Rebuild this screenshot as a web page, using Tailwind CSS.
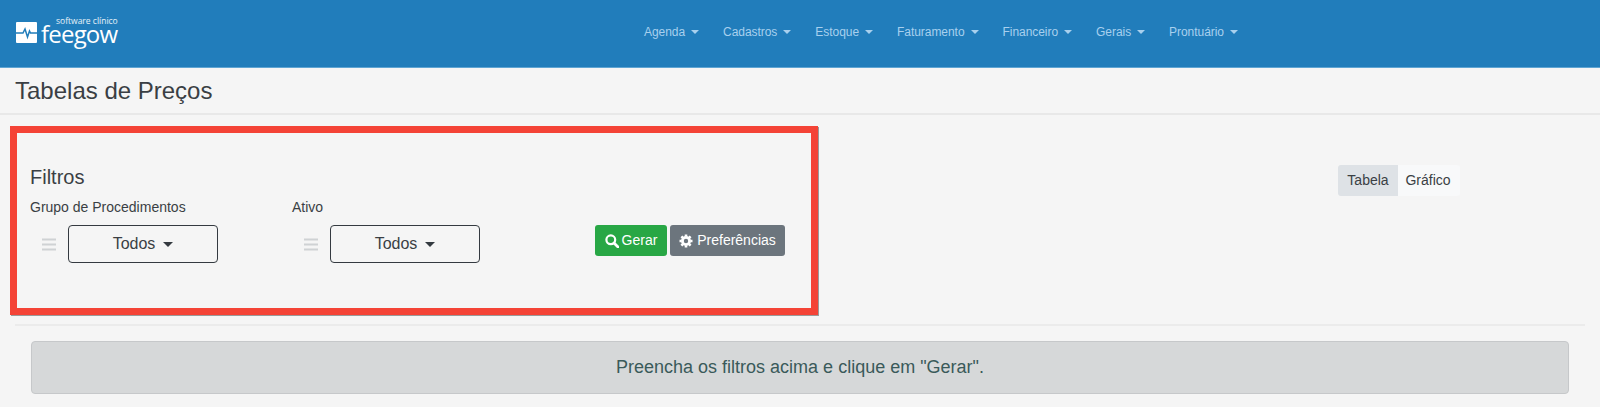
<!DOCTYPE html>
<html lang="pt">
<head>
<meta charset="utf-8">
<script src="https://cdn.jsdelivr.net/npm/@tailwindcss/browser@4"></script>
<title>Tabelas de Preços</title>
</head>
<body class="bg-[#f5f5f5] font-['Liberation_Sans',Arial,sans-serif] text-[#343a40] h-[407px] overflow-hidden">
<header class="h-[68px] bg-[#217dbb] border-b border-[#5fa5d3] flex">
  <a class="flex items-start pl-4 pt-[15px] w-[644px] shrink-0 text-white">
    <svg width="21" height="22" viewBox="0 0 21 22" class="mt-[7px]"><rect width="21" height="21" rx="1" fill="#fff"/><path d="M0 11h7l2-4 2.500 8 2-6 1 2h6.500" fill="none" stroke="#217dbb" stroke-width="1.500"/></svg>
    <span class="relative block ml-[4px] h-[34px] w-[78px]">
      <span class="absolute left-[15px] top-[2px] text-[8.500px] leading-[8px] whitespace-nowrap font-['Open_Sans',sans-serif] text-white/90">software clínico</span>
      <span class="absolute left-0 top-[10px] text-[24px] leading-[18px] tracking-[-0.8px] font-['Open_Sans',sans-serif]">feegow</span>
    </span>
  </a>
  <nav class="flex pt-[24px] text-[12px] tracking-[-0.05px] leading-[16px] text-[#a8d0ee] h-fit">
    <a class="flex items-center gap-[6px] mr-[24px]">Agenda<i class="border-x-[4px] border-t-[4px] border-x-transparent border-t-[#a8d0ee]"></i></a>
    <a class="flex items-center gap-[6px] mr-[24px]">Cadastros<i class="border-x-[4px] border-t-[4px] border-x-transparent border-t-[#a8d0ee]"></i></a>
    <a class="flex items-center gap-[6px] mr-[24px]">Estoque<i class="border-x-[4px] border-t-[4px] border-x-transparent border-t-[#a8d0ee]"></i></a>
    <a class="flex items-center gap-[6px] mr-[24px]">Faturamento<i class="border-x-[4px] border-t-[4px] border-x-transparent border-t-[#a8d0ee]"></i></a>
    <a class="flex items-center gap-[6px] mr-[24px]">Financeiro<i class="border-x-[4px] border-t-[4px] border-x-transparent border-t-[#a8d0ee]"></i></a>
    <a class="flex items-center gap-[6px] mr-[24px]">Gerais<i class="border-x-[4px] border-t-[4px] border-x-transparent border-t-[#a8d0ee]"></i></a>
    <a class="flex items-center gap-[6px]">Prontuário<i class="border-x-[4px] border-t-[4px] border-x-transparent border-t-[#a8d0ee]"></i></a>
  </nav>
</header>
<div class="h-[47px] border-b-2 border-[#e8e8e8] pl-[15px] flex items-center">
  <h1 class="text-[24px] leading-[28px] font-normal text-[#3a3f44]">Tabelas de Preços</h1>
</div>
<main class="pt-[11px] relative">
  <div class="flex items-start">
    <section class="ml-[10px] w-[808px] h-[189px] border-[7px] border-[#f44336] shadow-[1px_1px_0_#9a9a9a] pl-[13px] pt-[32px] shrink-0">
      <h2 class="text-[20px] leading-[24px] font-normal text-[#3a3f44]">Filtros</h2>
      <div class="flex mt-[10px] items-start">
        <div class="w-[262px]">
          <label class="block text-[14px] leading-[16px] text-[#3a3f44]">Grupo de Procedimentos</label>
          <div class="flex items-center mt-[10px] ml-[12px]">
            <svg width="14" height="13" viewBox="0 0 14 13" class="mr-[12px]"><path d="M0 1.500h14M0 6.500h14M0 11.500h14" stroke="#cfd2d4" stroke-width="2"/></svg>
            <button class="w-[150px] h-[38px] border border-[#343a40] rounded-[4px] flex items-center justify-center gap-[8px] text-[16px] text-[#3a3f44]">Todos<i class="border-x-[5px] border-t-[5px] border-x-transparent border-t-[#343a40]"></i></button>
          </div>
        </div>
        <div class="w-[303px]">
          <label class="block text-[14px] leading-[16px] text-[#3a3f44]">Ativo</label>
          <div class="flex items-center mt-[10px] ml-[12px]">
            <svg width="14" height="13" viewBox="0 0 14 13" class="mr-[12px]"><path d="M0 1.500h14M0 6.500h14M0 11.500h14" stroke="#cfd2d4" stroke-width="2"/></svg>
            <button class="w-[150px] h-[38px] border border-[#343a40] rounded-[4px] flex items-center justify-center gap-[8px] text-[16px] text-[#3a3f44]">Todos<i class="border-x-[5px] border-t-[5px] border-x-transparent border-t-[#343a40]"></i></button>
          </div>
        </div>
        <div class="flex gap-[3px] mt-[26px]">
          <button class="h-[31px] w-[72px] bg-[#28a745] rounded-[3px] text-white text-[14px] flex items-center justify-center gap-[3px]">
            <svg width="14" height="14" viewBox="0 0 14 14"><circle cx="5.800" cy="5.800" r="4.400" fill="none" stroke="#fff" stroke-width="2.200"/><path d="M9 9l4 4" stroke="#fff" stroke-width="2.800" stroke-linecap="round"/></svg>Gerar</button>
          <button class="h-[31px] w-[115px] bg-[#6c757d] rounded-[3px] text-white text-[14px] flex items-center justify-center gap-[4px]">
            <svg width="14" height="14" viewBox="0 0 14 14"><path d="M7 .500v2M7 11.500v2M.500 7h2M11.500 7h2M2.400 2.400l1.500 1.500M10.100 10.100l1.500 1.500M11.600 2.400l-1.500 1.500M3.900 10.100l-1.500 1.500" stroke="#fff" stroke-width="2.600"/><circle cx="7" cy="7" r="3.600" fill="none" stroke="#fff" stroke-width="2.800"/></svg>Preferências</button>
        </div>
      </div>
    </section>
    <div class="ml-[520px] mt-[39px] flex text-[14px] h-[31px]">
      <span class="w-[60px] bg-[#dee2e6] rounded-l-[3px] flex items-center justify-center text-[#3a3f44]">Tabela</span>
      <span class="w-[62px] bg-[#f8f9fa] rounded-r-[3px] flex items-center justify-center pr-[2px] text-[#3a3f44]">Gráfico</span>
    </div>
  </div>
  <div class="mx-[15px] mt-[9px] border-t-2 border-[#ebebeb]"></div>
  <div class="ml-[31px] mr-[31px] mt-[15px] h-[53px] pb-[1px] bg-[#d6d8d9] border border-[#c6c8ca] rounded-[4px] flex items-center justify-center text-[18px] text-[#3a5a5a]">Preencha os filtros acima e clique em "Gerar".</div>
</main>
</body>
</html>
